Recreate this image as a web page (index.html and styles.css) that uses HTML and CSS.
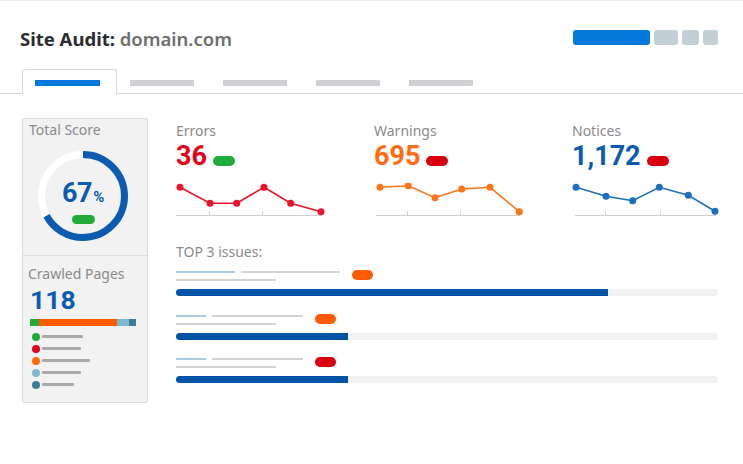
FILE: index.html
```html
<!DOCTYPE html>
<html>
<head>
<meta charset="utf-8">
<link rel="stylesheet" href="styles.css">
</head>
<body>
<div class="page">
  <div class="header">
    <h1 class="title"><span class="title-main">Site Audit:</span> <span class="title-domain">domain.com</span></h1>
    <div class="buttons">
      <span class="btn btn-primary"></span>
      <span class="btn btn-a"></span>
      <span class="btn btn-b"></span>
      <span class="btn btn-c"></span>
    </div>
  </div>
  <div class="tabs">
    <div class="tab active"><span class="tab-bar"></span></div>
    <div class="tab"><span class="tab-bar"></span></div>
    <div class="tab"><span class="tab-bar"></span></div>
    <div class="tab"><span class="tab-bar"></span></div>
    <div class="tab"><span class="tab-bar"></span></div>
  </div>
  <div class="main">
    <div class="side">
      <div class="side-score">
        <div class="side-label">Total Score</div>
        <div class="donut">
          <svg width="92" height="92" viewBox="0 0 92 92">
            <circle cx="46" cy="46" r="41.5" fill="none" stroke="#ffffff" stroke-width="7"/>
            <circle cx="46" cy="46" r="41.5" fill="none" stroke="#0b5cb0" stroke-width="7" stroke-dasharray="174.7 300" transform="rotate(-90 46 46)"/>
          </svg>
          <div class="donut-center">
            <div class="donut-value">67<span class="pct">%</span></div>
            <span class="pill pill-green pill-donut"></span>
          </div>
        </div>
      </div>
      <div class="side-pages">
        <div class="side-label">Crawled Pages</div>
        <div class="pages-value">118</div>
        <div class="stack">
          <span class="seg seg-green"></span>
          <span class="seg seg-orange"></span>
          <span class="seg seg-light"></span>
          <span class="seg seg-teal"></span>
        </div>
        <ul class="legend">
          <li><span class="dot dot-green"></span><span class="lg-line w41"></span></li>
          <li><span class="dot dot-red"></span><span class="lg-line w39"></span></li>
          <li><span class="dot dot-orange"></span><span class="lg-line w48"></span></li>
          <li><span class="dot dot-light"></span><span class="lg-line w39"></span></li>
          <li><span class="dot dot-teal"></span><span class="lg-line w32"></span></li>
        </ul>
      </div>
    </div>
    <div class="content">
      <div class="metrics">
        <div class="metric">
          <div class="metric-label">Errors</div>
          <div class="metric-row"><span class="metric-value red">36</span><span class="pill pill-green"></span></div>
          <svg class="chart" width="150" height="36" viewBox="0 0 150 36">
            <line x1="0" y1="32.5" x2="146" y2="32.5" stroke="#cfcfcf" stroke-width="1"/>
            <line x1="33.5" y1="28" x2="33.5" y2="33" stroke="#cfcfcf" stroke-width="1"/>
            <line x1="86.5" y1="28" x2="86.5" y2="33" stroke="#cfcfcf" stroke-width="1"/>
            <polyline points="4,4.3 34,20.3 60.7,20.3 88,4.3 114.7,20.3 145,28.7" fill="none" stroke="#e8142b" stroke-width="1.6"/>
            <g fill="#e8142b"><circle cx="4" cy="4.3" r="3.5"/><circle cx="34" cy="20.3" r="3.5"/><circle cx="60.7" cy="20.3" r="3.5"/><circle cx="88" cy="4.3" r="3.5"/><circle cx="114.7" cy="20.3" r="3.5"/><circle cx="145" cy="28.7" r="3.5"/></g>
          </svg>
        </div>
        <div class="metric">
          <div class="metric-label">Warnings</div>
          <div class="metric-row"><span class="metric-value orange">695</span><span class="pill pill-red"></span></div>
          <svg class="chart" width="150" height="36" viewBox="0 0 150 36">
            <line x1="2" y1="32.5" x2="146" y2="32.5" stroke="#cfcfcf" stroke-width="1"/>
            <line x1="33.5" y1="28" x2="33.5" y2="33" stroke="#cfcfcf" stroke-width="1"/>
            <line x1="86.5" y1="28" x2="86.5" y2="33" stroke="#cfcfcf" stroke-width="1"/>
            <polyline points="6,4.3 34.3,2.7 61,14.7 87.7,6 116,4.3 145.3,28.7" fill="none" stroke="#ff7417" stroke-width="1.6"/>
            <g fill="#ff7417"><circle cx="6" cy="4.3" r="3.5"/><circle cx="34.3" cy="2.7" r="3.5"/><circle cx="61" cy="14.7" r="3.5"/><circle cx="87.7" cy="6" r="3.5"/><circle cx="116" cy="4.3" r="3.5"/><circle cx="145.3" cy="28.7" r="3.5"/></g>
          </svg>
        </div>
        <div class="metric">
          <div class="metric-label">Notices</div>
          <div class="metric-row"><span class="metric-value blue">1,172</span><span class="pill pill-red"></span></div>
          <svg class="chart" width="150" height="36" viewBox="0 0 150 36">
            <line x1="3" y1="32.5" x2="144" y2="32.5" stroke="#cfcfcf" stroke-width="1"/>
            <line x1="33.5" y1="28" x2="33.5" y2="33" stroke="#cfcfcf" stroke-width="1"/>
            <line x1="88.5" y1="28" x2="88.5" y2="33" stroke="#cfcfcf" stroke-width="1"/>
            <polyline points="4,4.3 34,13.3 60.7,17.7 87.3,4.3 116.3,12.3 143,28.3" fill="none" stroke="#1b6fc2" stroke-width="1.6"/>
            <g fill="#1b6fc2"><circle cx="4" cy="4.3" r="3.5"/><circle cx="34" cy="13.3" r="3.5"/><circle cx="60.7" cy="17.7" r="3.5"/><circle cx="87.3" cy="4.3" r="3.5"/><circle cx="116.3" cy="12.3" r="3.5"/><circle cx="143" cy="28.3" r="3.5"/></g>
          </svg>
        </div>
      </div>
      <div class="issues">
        <div class="issues-title">TOP 3 issues:</div>
        <div class="issue">
          <div class="issue-head">
            <div class="issue-lines">
              <div class="il-row"><span class="il il-blue w59"></span><span class="il il-gray w99"></span></div>
              <span class="il il-gray w100"></span>
            </div>
            <span class="pill pill-orange"></span>
          </div>
          <div class="track"><div class="fill" style="width: 79.7%"></div></div>
        </div>
        <div class="issue">
          <div class="issue-head">
            <div class="issue-lines">
              <div class="il-row"><span class="il il-blue w30"></span><span class="il il-gray w91"></span></div>
              <span class="il il-gray w100"></span>
            </div>
            <span class="pill pill-orange"></span>
          </div>
          <div class="track"><div class="fill" style="width: 31.7%"></div></div>
        </div>
        <div class="issue">
          <div class="issue-head">
            <div class="issue-lines">
              <div class="il-row"><span class="il il-blue w30"></span><span class="il il-gray w91"></span></div>
              <span class="il il-gray w100"></span>
            </div>
            <span class="pill pill-red"></span>
          </div>
          <div class="track"><div class="fill" style="width: 31.7%"></div></div>
        </div>
      </div>
    </div>
  </div>
</div>
</body>
</html>
```

FILE: styles.css
```css
* { box-sizing: border-box; }
html, body { margin: 0; padding: 0; background: #ffffff; }
body { font-family: "Noto Sans", "Open Sans", sans-serif; }
.page {
  width: 743px;
  height: 464px;
  border-top: 1px solid #eeeeee;
  overflow: hidden;
}
.header {
  display: flex;
  justify-content: space-between;
  align-items: flex-start;
  padding: 26px 25px 0 20px;
  height: 68px;
}
.title {
  margin: 0;
  font-size: 18.5px;
  line-height: 24px;
  font-weight: 700;
}
.title-main { color: #2c2c33; }
.title-domain { color: #6e6e6e; font-weight: 600; }
.buttons { display: flex; gap: 4px; padding-top: 3px; }
.btn { display: block; height: 15px; border-radius: 3px; background: #c2d0d6; }
.btn-primary { width: 77px; background: #0479dd; }
.btn-a { width: 24px; }
.btn-b { width: 17px; }
.btn-c { width: 15px; }
.tabs {
  display: flex;
  padding-left: 22px;
  border-bottom: 1px solid #d8d8dc;
  height: 25px;
}
.tab {
  width: 93px;
  height: 25px;
  padding: 11px 0 0 13px;
}
.tab-bar { display: block; width: 64px; height: 6px; background: #cfd0d3; }
.tab.active {
  width: 95px;
  background: #ffffff;
  border: 1px solid #d8d8dc;
  border-bottom: none;
  border-radius: 3px 3px 0 0;
  height: 25px;
  padding: 10px 0 0 12px;
  margin-bottom: -1px;
}
.tab.active .tab-bar { background: #0479dd; width: 65px; }
.main {
  display: flex;
  padding: 24px 0 0 22px;
}
.side {
  width: 126px;
  height: 285px;
  background: #f2f2f2;
  border: 1px solid #dcdcdc;
  border-radius: 2px;
  display: flex;
  flex-direction: column;
}
.side-score {
  height: 137px;
  border-bottom: 1px solid #dcdcdc;
  padding: 2px 0 0 6px;
}
.side-label {
  font-size: 14px;
  line-height: 18px;
  color: #8a8a8a;
}
.donut {
  position: relative;
  width: 92px;
  height: 92px;
  margin: 11px 0 0 8px;
}
.donut svg { display: block; }
.donut-center {
  position: absolute;
  inset: 0;
  display: flex;
  flex-direction: column;
  align-items: center;
  padding: 29px 0 0 0;
}
.num {
  font-family: Roboto, "Noto Sans", sans-serif;
}
.donut-value {
  font-family: Roboto, "Noto Sans", sans-serif;
  font-size: 27px;
  line-height: 28px;
  font-weight: 700;
  color: #0b5cb0;
  letter-spacing: -0.3px;
}
.pct { font-size: 15px; margin-left: 1px; }
.side-pages { padding: 9px 0 0 5px; }
.pages-value {
  font-family: Roboto, "Noto Sans", sans-serif;
  font-size: 26.5px;
  line-height: 30px;
  font-weight: 700;
  color: #0b5cb0;
  margin: 1.5px 0 0 2px;
}
.stack {
  display: flex;
  width: 106px;
  height: 7px;
  margin: 4px 0 0 2px;
}
.seg { display: block; height: 100%; }
.seg-green { width: 9px; background: #1faa3a; }
.seg-orange { width: 78px; background: #ff5a00; }
.seg-light { width: 12px; background: #7dbad0; }
.seg-teal { width: 7px; background: #3d7d96; }
.legend { list-style: none; margin: 5px 0 0 4px; padding: 0; }
.legend li { display: flex; align-items: center; height: 12px; }
.dot { display: block; width: 8px; height: 8px; border-radius: 50%; margin-right: 2px; }
.dot-green { background: #1faa3a; }
.dot-red { background: #e0001b; }
.dot-orange { background: #ff6a10; }
.dot-light { background: #7dbad0; }
.dot-teal { background: #3d7d96; }
.lg-line { display: block; height: 3px; background: #a9a9a9; border-radius: 1px; }
.w41 { width: 41px; } .w39 { width: 39px; } .w48 { width: 48px; } .w32 { width: 32px; }
.content {
  margin-left: 28px;
  width: 542px;
}
.metrics { display: flex; }
.metric { flex: none; width: 198px; padding-top: 3px; }
.metric:last-child { width: 146px; }
.metric-label {
  font-size: 14px;
  line-height: 19px;
  color: #8a8a8a;
}
.metric-row { display: flex; align-items: flex-start; height: 32px; }
.metric-value {
  font-family: Roboto, "Noto Sans", sans-serif;
  font-size: 27px;
  line-height: 32px;
  font-weight: 700;
}
.red { color: #e3001b; }
.orange { color: #ff6a13; }
.blue { color: #0b5cb0; }
.metric-row .pill { margin: 16px 0 0 6px; }
.pill { display: block; width: 22px; height: 9.5px; border-radius: 5px; }
.pill-green { background: #1faa3a; }
.pill-red { background: #d9000f; }
.pill-orange { background: #ff5a00; }
.pill-donut { margin-top: 4px; width: 23px; height: 8.5px; }
.chart { display: block; margin-top: 11px; }
.issues { margin-top: 23.5px; }
.issues-title {
  font-size: 14px;
  line-height: 18px;
  color: #8a8a8a;
}
.issue { margin-top: 9.5px; }
.issue + .issue { margin-top: 17.5px; }
.issue-head { display: flex; align-items: flex-start; height: 10px; }
.issue-lines { display: flex; flex-direction: column; gap: 6px; margin-top: 1px; }
.il-row { display: flex; gap: 6px; }
.il { display: block; height: 2px; }
.il-blue { background: #a9cbe6; }
.il-gray { background: #d3d3d3; }
.w59 { width: 59px; } .w99 { width: 99px; } .w100 { width: 100px; } .w30 { width: 30px; } .w91 { width: 91px; }
.issue-head .pill { width: 21px; height: 10px; margin-left: 12px; }
.track {
  margin-top: 9px;
  height: 7px;
  background: #f2f2f2;
  border-radius: 4px;
  width: 542px;
}
.fill { height: 100%; background: #0054a6; border-radius: 4px 0 0 4px; }
```
